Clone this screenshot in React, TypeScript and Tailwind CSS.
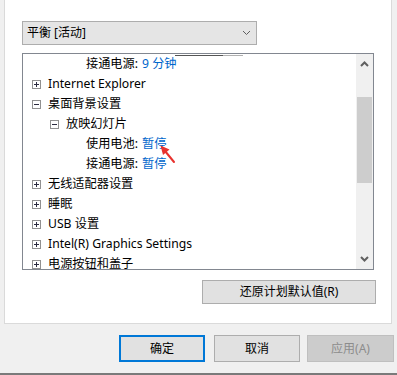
import React from "react";

const font = "font-['Noto_Sans','Noto_Sans_CJK_SC',sans-serif]";

function Expander({ open }: { open: boolean }) {
  return (
    <div className="relative w-[9px] h-[9px] border border-[#919191] bg-white shrink-0">
      <div className="absolute left-[1px] top-[3px] w-[5px] h-[1px] bg-[#2b2b40]" />
      {!open && <div className="absolute left-[3px] top-[1px] w-[1px] h-[5px] bg-[#2b2b40]" />}
    </div>
  );
}

function Node({ label, open }: { label: string; open: boolean }) {
  return (
    <div className="h-[20px] shrink-0 flex items-center pl-[9px] gap-[7px] whitespace-nowrap">
      <Expander open={open} />
      <span>{label}</span>
    </div>
  );
}

function Sub({ label, open }: { label: string; open: boolean }) {
  return (
    <div className="h-[20px] shrink-0 flex items-center pl-[27px] gap-[7px] whitespace-nowrap">
      <Expander open={open} />
      <span>{label}</span>
    </div>
  );
}

function Leaf({ label, value }: { label: string; value: string }) {
  return (
    <div className="h-[20px] shrink-0 flex items-center pl-[63px] whitespace-nowrap">
      <span>{label}: </span>
      <span className="ml-[4px] text-[#0066cc]">{value}</span>
    </div>
  );
}

export default function App() {
  return (
    <div className={`w-[397px] h-[375px] bg-[#f0f0f0] flex flex-col text-[12px] text-black ${font}`}>
      <div className="ml-[4px] w-[388px] h-[324px] shrink-0 bg-white border-l border-r border-b border-[#dadada] pt-[21px] pl-[17px] flex flex-col">
        <div className="w-[235px] h-[24px] shrink-0 bg-[#e5e5e5] border border-[#adadad] flex items-center justify-between pl-[4px] pr-[5px]">
          <span>平衡 [活动]</span>
          <svg width="9" height="6" viewBox="0 0 9 6">
            <path d="M1 1 L4.5 4.5 L8 1" fill="none" stroke="#606060" strokeWidth="1" />
          </svg>
        </div>
        <div className="relative mt-[8px] w-[352px] h-[217px] shrink-0 border border-[#828790] flex overflow-hidden">
          <div className="flex-1 flex flex-col leading-none relative text-[12.2px]">
            <div className="absolute top-[1px] left-[152px] w-[48px] h-[1px] bg-[#555]" />
            <div className="absolute top-[1px] left-[200px] w-[20px] h-[1px] bg-[#b0b0b0]" />
            <Leaf label="接通电源" value="9 分钟" />
            <Node label="Internet Explorer" open={false} />
            <Node label="桌面背景设置" open={true} />
            <Sub label="放映幻灯片" open={true} />
            <Leaf label="使用电池" value="暂停" />
            <Leaf label="接通电源" value="暂停" />
            <Node label="无线适配器设置" open={false} />
            <Node label="睡眠" open={false} />
            <Node label="USB 设置" open={false} />
            <Node label="Intel(R) Graphics Settings" open={false} />
            <Node label="电源按钮和盖子" open={false} />
          </div>
          <div className="w-[17px] bg-[#f0f0f0] flex flex-col items-center">
            <div className="h-[20px] shrink-0 flex items-center justify-center">
              <svg width="9" height="6" viewBox="0 0 9 6">
                <path d="M1 5 L4.5 1.5 L8 5" fill="none" stroke="#606060" strokeWidth="2" />
              </svg>
            </div>
            <div className="mt-[23px] w-[15px] h-[86px] shrink-0 bg-[#cdcdcd]" />
            <div className="flex-1" />
            <div className="h-[20px] shrink-0 flex items-center justify-center">
              <svg width="9" height="6" viewBox="0 0 9 6">
                <path d="M1 1 L4.5 4.5 L8 1" fill="none" stroke="#606060" strokeWidth="2" />
              </svg>
            </div>
          </div>
          <svg className="absolute left-0 top-0" width="352" height="217" viewBox="23 54 352 217">
            <line x1="174" y1="162" x2="165" y2="151" stroke="#e8322e" strokeWidth="2" strokeLinecap="round" />
            <polygon points="160.5,145.5 169.5,149.5 163,155" fill="#e8322e" />
          </svg>
        </div>
        <div className="mt-[10px] ml-[180px] w-[174px] h-[24px] shrink-0 bg-[#e1e1e1] border border-[#adadad] flex items-center justify-center">
          还原计划默认值(R)
        </div>
      </div>
      <div className="mt-[11px] flex pl-[119px] gap-[9px]">
        <div className="w-[86px] h-[27px] bg-[#e1e1e1] border-2 border-[#0078d7] flex items-center justify-center">确定</div>
        <div className="w-[86px] h-[27px] bg-[#e1e1e1] border border-[#adadad] flex items-center justify-center">取消</div>
        <div className="ml-[-2px] w-[87px] h-[27px] bg-[#cccccc] border border-[#bfbfbf] flex items-center justify-center text-[#8c8c8c]">应用(A)</div>
      </div>
      <div className="mt-auto h-[2px] bg-[#7a7a7a]" />
    </div>
  );
}
